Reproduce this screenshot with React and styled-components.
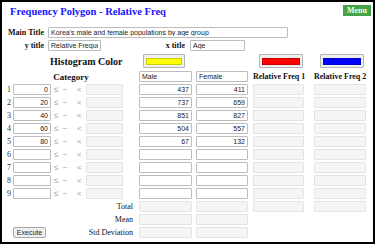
import React from 'react';
import styled, { createGlobalStyle } from 'styled-components';

const GlobalStyle = createGlobalStyle`
  html, body {
    margin: 0;
    padding: 0;
    background: #fff;
  }
  * {
    box-sizing: border-box;
  }
`;

const Page = styled.div`
  width: 375px;
  height: 244px;
  border: 2px solid #000;
  font-family: 'Liberation Serif', serif;
  overflow: hidden;
`;

const Header = styled.div`
  display: flex;
  justify-content: space-between;
  align-items: flex-start;
  height: 24px;
  padding: 3px 2px 0 8px;
`;

const Title = styled.h1`
  margin: 0;
  font-size: 10.5px;
  line-height: 13px;
  font-weight: bold;
  color: #1414ff;
`;

const MenuButton = styled.a`
  display: flex;
  align-items: center;
  justify-content: center;
  width: 28px;
  height: 11px;
  background: #43a547;
  color: #f4fff4;
  font-size: 8px;
  font-weight: bold;
  text-decoration: none;
`;

const FormRow = styled.div`
  display: flex;
  align-items: center;
  height: 13px;
`;

const Label = styled.label`
  width: ${(p) => p.$w}px;
  padding-right: ${(p) => p.$pr || 4}px;
  text-align: right;
  font-size: 8px;
  font-weight: bold;
  color: #111;
  white-space: nowrap;
`;

const Input = styled.input`
  width: ${(p) => p.$w}px;
  height: 11px;
  margin-left: ${(p) => p.$ml || 0}px;
  padding: 0 2px;
  border: 1px solid ${(p) => (p.disabled ? '#e4e4e4' : '#bcbcbc')};
  border-radius: 1px;
  background: ${(p) => (p.disabled ? '#f5f5f5' : '#fff')};
  font-family: 'Liberation Sans', Arial, sans-serif;
  font-size: 7px;
  color: #222;
  text-align: ${(p) => (p.$right ? 'right' : 'left')};
  outline: none;
`;

const Grid = styled.div`
  display: grid;
  grid-template-columns: 8px 39px 35px 37px 15px 57px 57px 61px 58px;
  grid-template-rows: 18px repeat(13, 13px);
  align-items: center;
  padding-left: 2px;
`;

const Cell = styled.div`
  grid-column: ${(p) => p.$col || 'auto'};
  display: flex;
  align-items: center;
  justify-content: ${(p) => p.$justify || 'flex-start'};
  padding-left: ${(p) => p.$pl || 0}px;
  padding-right: ${(p) => p.$pr || 0}px;
  align-self: ${(p) => p.$self || 'center'};
`;

const HeadText = styled.span`
  font-size: ${(p) => p.$size || 8}px;
  font-weight: bold;
  color: #111;
  white-space: nowrap;
`;

const RowNum = styled.span`
  font-size: 8px;
  color: #333;
`;

const Range = styled.span`
  font-family: 'Liberation Sans', Arial, sans-serif;
  font-size: 8px;
  color: #9a9a9a;
  margin-left: ${(p) => p.$ml}px;
`;

const Swatch = styled.button`
  width: ${(p) => p.$w}px;
  height: 14px;
  margin: 2px 0 0 ${(p) => p.$ml}px;
  padding: 3px 2px 2px;
  border: 1px solid #b4b4b4;
  border-radius: 1px;
  background: #f0f0f0;
  display: flex;
`;

const SwatchFill = styled.span`
  flex: 1;
  height: 7px;
  background: ${(p) => p.$color};
  border: 1px solid rgba(0, 0, 0, 0.2);
`;

const ExecuteButton = styled.button`
  width: 33px;
  height: 11px;
  margin-left: 9px;
  padding: 0;
  border: 1px solid #a8a8a8;
  border-radius: 2px;
  background: #efefef;
  font-family: 'Liberation Sans', Arial, sans-serif;
  font-size: 7px;
  color: #222;
`;

const data = [
  { from: '0', male: '437', female: '411' },
  { from: '20', male: '737', female: '659' },
  { from: '40', male: '851', female: '827' },
  { from: '60', male: '504', female: '557' },
  { from: '80', male: '67', female: '132' },
  { from: '', male: '', female: '' },
  { from: '', male: '', female: '' },
  { from: '', male: '', female: '' },
  { from: '', male: '', female: '' },
];

const DataRow = ({ n, row }) => (
  <>
    <Cell $justify="flex-end" $pr={1}>
      <RowNum>{n}</RowNum>
    </Cell>
    <Cell>
      <Input $w={38} $ml={1} $right defaultValue={row.from} />
    </Cell>
    <Cell>
      <Range $ml={3}>≤</Range>
      <Range $ml={4}>~</Range>
      <Range $ml={10}>&lt;</Range>
    </Cell>
    <Cell>
      <Input $w={37} disabled />
    </Cell>
    <Cell />
    <Cell>
      <Input $w={53} $ml={1} $right defaultValue={row.male} />
    </Cell>
    <Cell>
      <Input $w={52} $ml={1} $right defaultValue={row.female} />
    </Cell>
    <Cell>
      <Input $w={51} $ml={1} disabled />
    </Cell>
    <Cell>
      <Input $w={52} $ml={1} disabled />
    </Cell>
  </>
);

const SummaryRow = ({ label, withFreq, button }) => (
  <>
    <Cell $col="1 / 6" $justify="space-between" $pr={5}>
      {button ? <ExecuteButton>Execute</ExecuteButton> : <span />}
      <HeadText style={{ fontWeight: 'normal' }}>{label}</HeadText>
    </Cell>
    <Cell>
      <Input $w={53} $ml={1} disabled />
    </Cell>
    <Cell>
      <Input $w={52} $ml={1} disabled />
    </Cell>
    {withFreq ? (
      <>
        <Cell>
          <Input $w={51} $ml={1} disabled />
        </Cell>
        <Cell>
          <Input $w={52} $ml={1} disabled />
        </Cell>
      </>
    ) : (
      <Cell $col="8 / 10" />
    )}
  </>
);

export default function App() {
  return (
    <Page>
      <GlobalStyle />
      <Header>
        <Title>Frequency Polygon - Relative Freq</Title>
        <MenuButton href="#">Menu</MenuButton>
      </Header>
      <FormRow>
        <Label $w={46}>Main Title</Label>
        <Input $w={240} defaultValue="Korea's male and female populations by age group" />
      </FormRow>
      <FormRow>
        <Label $w={46}>y title</Label>
        <Input $w={53} defaultValue="Relative Freque" />
        <Label $w={89} $pr={5}>x title</Label>
        <Input $w={55} defaultValue="Age" />
      </FormRow>
      <Grid>
        <Cell $col="1 / 6" $pl={46}>
          <HeadText $size={10}>Histogram Color</HeadText>
        </Cell>
        <Cell $self="start">
          <Swatch $w={42} $ml={5}>
            <SwatchFill $color="#ffff00" />
          </Swatch>
        </Cell>
        <Cell />
        <Cell $self="start">
          <Swatch $w={44} $ml={7}>
            <SwatchFill $color="#ff0000" />
          </Swatch>
        </Cell>
        <Cell $self="start">
          <Swatch $w={44} $ml={7}>
            <SwatchFill $color="#0000ff" />
          </Swatch>
        </Cell>

        <Cell $col="1 / 6" $justify="center">
          <HeadText $size={9}>Category</HeadText>
        </Cell>
        <Cell>
          <Input $w={53} $ml={1} defaultValue="Male" />
        </Cell>
        <Cell>
          <Input $w={52} $ml={1} defaultValue="Female" />
        </Cell>
        <Cell $pl={1}>
          <HeadText>Relative Freq 1</HeadText>
        </Cell>
        <Cell $pl={1}>
          <HeadText>Relative Freq 2</HeadText>
        </Cell>

        {data.map((row, i) => (
          <DataRow key={i} n={i + 1} row={row} />
        ))}

        <SummaryRow label="Total" withFreq />
        <SummaryRow label="Mean" />
        <SummaryRow label="Std Deviation" button />
      </Grid>
    </Page>
  );
}
